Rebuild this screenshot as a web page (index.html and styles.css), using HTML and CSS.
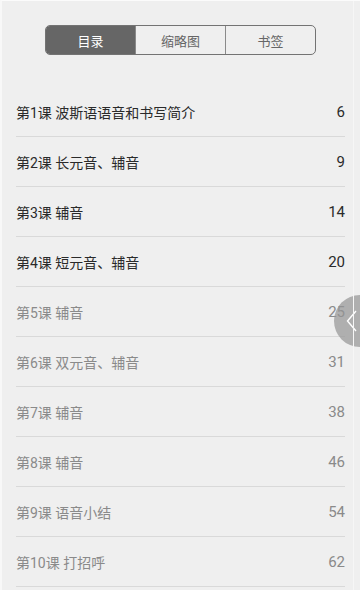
FILE: index.html
```html
<!DOCTYPE html>
<html lang="zh">
<head>
<meta charset="utf-8">
<link rel="stylesheet" href="styles.css">
</head>
<body>
<div class="screen">
  <div class="tabs">
    <div class="tab active">目录</div>
    <div class="tab">缩略图</div>
    <div class="tab">书签</div>
  </div>
  <ul class="toc">
    <li class="row"><span class="title">第1课 波斯语语音和书写简介</span><span class="page">6</span></li>
    <li class="row"><span class="title">第2课 长元音、辅音</span><span class="page">9</span></li>
    <li class="row"><span class="title">第3课 辅音</span><span class="page">14</span></li>
    <li class="row"><span class="title">第4课 短元音、辅音</span><span class="page">20</span></li>
    <li class="row dim"><span class="title">第5课 辅音</span><span class="page">25</span></li>
    <li class="row dim"><span class="title">第6课 双元音、辅音</span><span class="page">31</span></li>
    <li class="row dim"><span class="title">第7课 辅音</span><span class="page">38</span></li>
    <li class="row dim"><span class="title">第8课 辅音</span><span class="page">46</span></li>
    <li class="row dim"><span class="title">第9课 语音小结</span><span class="page">54</span></li>
    <li class="row dim"><span class="title">第10课 打招呼</span><span class="page">62</span></li>
  </ul>
  <div class="handle">
    <svg width="11" height="22" viewBox="0 0 11 22"><path d="M10 1 L1.5 11 L10 21" fill="none" stroke="#fff" stroke-width="1.4"/></svg>
  </div>
</div>
</body>
</html>
```
FILE: styles.css
```css
html, body {
  margin: 0;
  padding: 0;
  background: #efefef;
}
.screen {
  position: relative;
  width: 360px;
  height: 590px;
  box-sizing: border-box;
  border-top: 1px solid #fbfbfb;
  border-left: 2px solid #f8f8f8;
  overflow: hidden;
  font-family: "Roboto", "Noto Sans CJK SC", sans-serif;
}
.screen::after {
  content: "";
  position: absolute;
  top: 0;
  bottom: 0;
  left: 351px;
  width: 1px;
  background: #f6f6f6;
}
.tabs {
  display: flex;
  width: 271px;
  height: 30px;
  box-sizing: border-box;
  margin: 24px 0 0 43px;
  border: 1px solid #737373;
  border-radius: 5px;
  overflow: hidden;
}
.tab {
  flex: 1;
  display: flex;
  align-items: center;
  justify-content: center;
  font-size: 13px;
  color: #666;
  border-left: 1px solid #8a8a8a;
}
.tab:first-child {
  border-left: none;
}
.tab.active {
  background: #666;
  color: #fff;
}
.toc {
  list-style: none;
  margin: 32px 0 0 0;
  padding: 0 15px 0 14px;
}
.row {
  display: flex;
  align-items: center;
  justify-content: space-between;
  height: 49px;
  border-bottom: 1px solid #d9d9d9;
  font-size: 14px;
  color: #2a2a2a;
}
.row.dim {
  color: #8a8a8a;
}
.page {
  font-size: 15px;
}
.handle {
  position: absolute;
  left: 332px;
  top: 294px;
  width: 52px;
  height: 52px;
  border-radius: 50%;
  background: rgba(150, 150, 150, 0.72);
  display: flex;
  align-items: center;
  padding-left: 12px;
  box-sizing: border-box;
}
```
